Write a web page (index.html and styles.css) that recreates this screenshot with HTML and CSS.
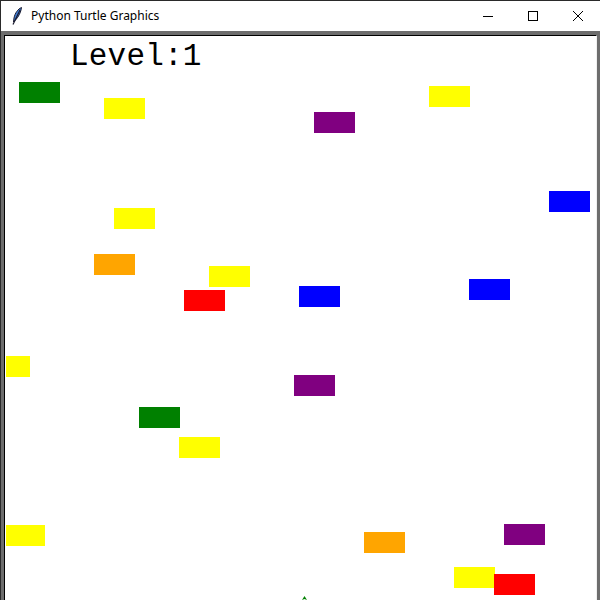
FILE: index.html
```html
<!DOCTYPE html>
<html>
<head>
<meta charset="utf-8">
<title>Python Turtle Graphics</title>
<link rel="stylesheet" href="styles.css">
</head>
<body>
<div class="window">
  <div class="titlebar">
    <svg class="feather" width="12" height="20" viewBox="0 0 12 20">
      <path d="M10.5 1.5 C7 3 4 7 3 12 L2.5 16 L4.5 14 C7.5 11 10 6 10.5 1.5 Z" fill="#3f7fd8" stroke="#1a1a2e" stroke-width="1"/>
      <path d="M9 4 L2 18.5" stroke="#1a1a2e" stroke-width="1.2" fill="none"/>
    </svg>
    <span class="title">Python Turtle Graphics</span>
    <div class="controls">
      <span class="ctl"><svg width="12" height="12" viewBox="0 0 12 12"><path d="M1 6.5 H11" stroke="#000" stroke-width="1"/></svg></span>
      <span class="ctl"><svg width="12" height="12" viewBox="0 0 12 12"><rect x="1.5" y="1.5" width="9" height="9" fill="none" stroke="#000" stroke-width="1"/></svg></span>
      <span class="ctl"><svg width="12" height="12" viewBox="0 0 12 12"><path d="M1 1 L11 11 M11 1 L1 11" stroke="#000" stroke-width="1"/></svg></span>
    </div>
  </div>
  <div class="frame">
    <div class="canvas">
      <div class="level">Level:1</div>
      <div class="blk green" style="left:14px;top:46px"></div>
      <div class="blk yellow" style="left:99px;top:62px"></div>
      <div class="blk purple" style="left:309px;top:76px"></div>
      <div class="blk yellow" style="left:424px;top:50px"></div>
      <div class="blk blue" style="left:544px;top:155px"></div>
      <div class="blk yellow" style="left:109px;top:172px"></div>
      <div class="blk orange" style="left:89px;top:218px"></div>
      <div class="blk yellow" style="left:204px;top:230px"></div>
      <div class="blk red" style="left:179px;top:254px"></div>
      <div class="blk blue" style="left:294px;top:250px"></div>
      <div class="blk blue" style="left:464px;top:243px"></div>
      <div class="blk yellow" style="left:1px;top:320px;width:24px"></div>
      <div class="blk purple" style="left:289px;top:339px"></div>
      <div class="blk green" style="left:134px;top:371px"></div>
      <div class="blk yellow" style="left:174px;top:401px"></div>
      <div class="blk yellow" style="left:1px;top:489px;width:39px"></div>
      <div class="blk orange" style="left:359px;top:496px"></div>
      <div class="blk purple" style="left:499px;top:488px"></div>
      <div class="blk yellow" style="left:449px;top:531px"></div>
      <div class="blk red" style="left:489px;top:538px"></div>
      <svg class="turtle" width="7" height="5" viewBox="0 0 7 5"><path d="M3.5 0 L6 4 L3.5 3 L1 4 Z" fill="#008000"/></svg>
    </div>
  </div>
</div>
</body>
</html>
```
FILE: styles.css
```css
html, body {
  margin: 0;
  padding: 0;
  background: #ffffff;
}
.window {
  width: 600px;
  height: 600px;
  box-sizing: border-box;
  border-top: 1px solid #2a2a2a;
  border-left: 1px solid #2a2a2a;
  display: flex;
  flex-direction: column;
  overflow: hidden;
  background: #6d6d6d;
}
.titlebar {
  height: 30px;
  flex: none;
  background: #ffffff;
  display: flex;
  align-items: center;
  padding-left: 10px;
  font-family: "Noto Sans", "Open Sans", sans-serif;
  font-size: 12px;
  color: #000;
}
.feather {
  display: block;
  margin-right: 8px;
  margin-top: -1px;
}
.title {
  line-height: 16px;
  margin-top: -1px;
}
.controls {
  margin-left: auto;
  display: flex;
  height: 100%;
}
.ctl {
  width: 45px;
  height: 100%;
  display: flex;
  align-items: center;
  justify-content: center;
}
.ctl svg { display: block; margin-top: -1px; }
.frame {
  flex: 1;
  padding: 4px 3px 0 3px;
  display: flex;
  background: #6d6d6d;
}
.canvas {
  flex: 1;
  position: relative;
  background: #ffffff;
  border-top: 1px solid #000000;
  border-left: 1px solid #000000;
  border-right: 1px solid #f0f0f0;
  overflow: hidden;
}
.level {
  position: absolute;
  left: 65px;
  top: 5px;
  font-family: "Liberation Mono", "DejaVu Sans Mono", monospace;
  font-size: 31px;
  line-height: 31px;
  letter-spacing: 0.2px;
  color: #000;
  white-space: nowrap;
}
.blk {
  position: absolute;
  width: 41px;
  height: 21px;
}
.green { background: #008000; }
.yellow { background: #ffff00; }
.purple { background: #800080; }
.blue { background: #0000ff; }
.orange { background: #ffa500; }
.red { background: #ff0000; }
.turtle {
  position: absolute;
  left: 296px;
  top: 560px;
}
```
